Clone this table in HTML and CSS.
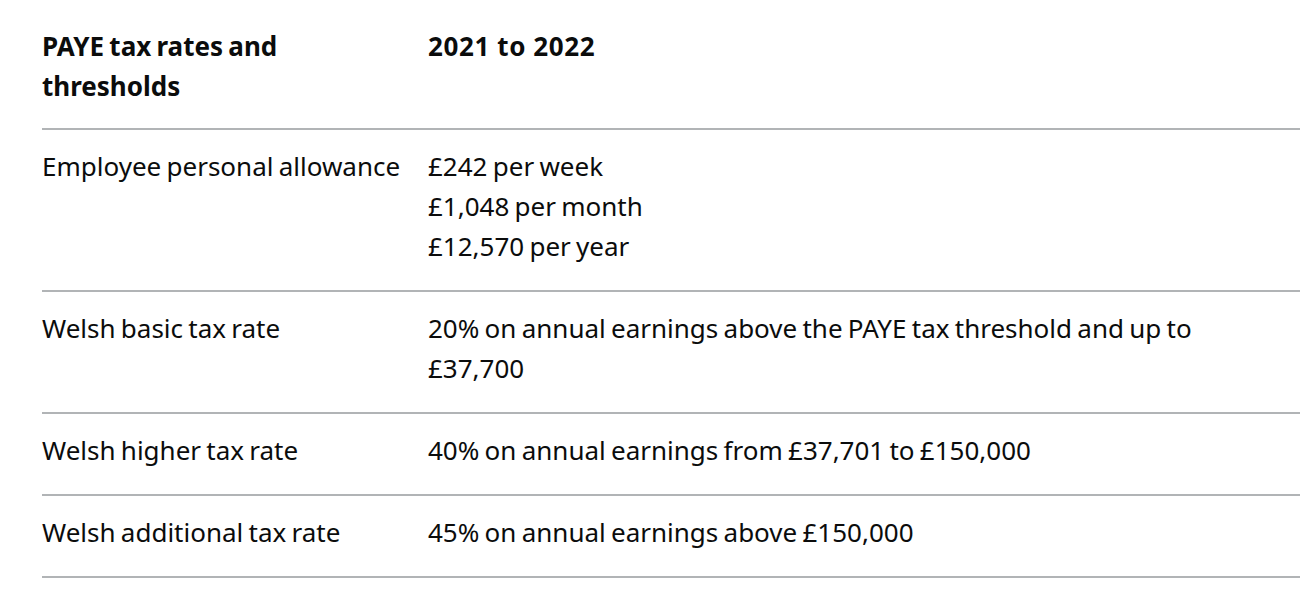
FILE: index.html
```html
<!DOCTYPE html>
<html lang="en">
<head>
<meta charset="utf-8">
<title>PAYE tax rates and thresholds</title>
<link rel="stylesheet" href="styles.css">
</head>
<body>
<main class="page">
  <table class="rates">
    <colgroup>
      <col class="col-label">
      <col class="col-value">
    </colgroup>
    <thead>
      <tr>
        <th class="cell head" scope="col">PAYE tax rates and thresholds</th>
        <th class="cell head year" scope="col">2021 to 2022</th>
      </tr>
    </thead>
    <tbody>
      <tr>
        <td class="cell label">Employee personal allowance</td>
        <td class="cell">£242 per week<br>£1,048 per month<br>£12,570 per year</td>
      </tr>
      <tr>
        <td class="cell label">Welsh basic tax rate</td>
        <td class="cell">20% on annual earnings above the PAYE tax threshold and up to £37,700</td>
      </tr>
      <tr>
        <td class="cell label">Welsh higher tax rate</td>
        <td class="cell">40% on annual earnings from £37,701 to £150,000</td>
      </tr>
      <tr>
        <td class="cell label">Welsh additional tax rate</td>
        <td class="cell">45% on annual earnings above £150,000</td>
      </tr>
    </tbody>
  </table>
</main>
</body>
</html>
```

FILE: styles.css
```css
html, body {
  margin: 0;
  padding: 0;
  background: #ffffff;
}

body {
  font-family: "Noto Sans", "Liberation Sans", sans-serif;
  color: #0b0c0c;
}

.page {
  padding: 6px 14px 0 42px;
}

.rates {
  width: 1258px;
  border-collapse: collapse;
  border-spacing: 0;
  table-layout: fixed;
}

.col-label {
  width: 386px;
}

.cell {
  font-size: 26px;
  line-height: 40px;
  font-weight: 400;
  word-spacing: -1.5px;
  text-align: left;
  vertical-align: top;
  padding: 16px 30px 24px 0;
  border-bottom: 2px solid #b1b4b6;
}

.label {
  white-space: nowrap;
}

.head {
  font-weight: 700;
  padding: 20px 30px 22px 0;
}

.year {
  letter-spacing: 0.6px;
  word-spacing: 0;
}
```
